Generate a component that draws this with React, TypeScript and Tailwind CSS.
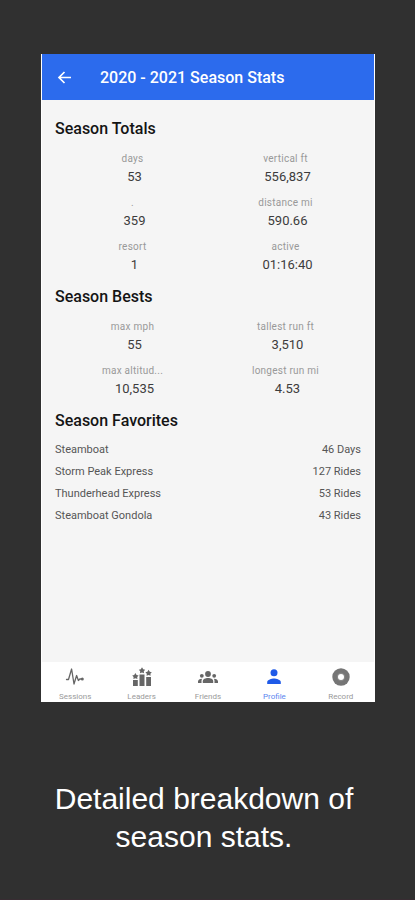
import type { ReactNode } from "react";

type Stat = { label: string; value: string };

const totals: Stat[] = [
    { label: "days", value: "53" },
    { label: "vertical ft", value: "556,837" },
    { label: ".", value: "359" },
    { label: "distance mi", value: "590.66" },
    { label: "resort", value: "1" },
    { label: "active", value: "01:16:40" },
];

const bests: Stat[] = [
    { label: "max mph", value: "55" },
    { label: "tallest run ft", value: "3,510" },
    { label: "max altitud...", value: "10,535" },
    { label: "longest run mi", value: "4.53" },
];

const favorites = [
    { name: "Steamboat", count: "46 Days" },
    { name: "Storm Peak Express", count: "127 Rides" },
    { name: "Thunderhead Express", count: "53 Rides" },
    { name: "Steamboat Gondola", count: "43 Rides" },
];

const SessionsIcon = () => (
    <svg viewBox="0 0 20 20" className="w-5 h-5" fill="none" stroke="currentColor" strokeWidth="1.3" strokeLinejoin="round" strokeLinecap="round">
        <path d="M1.5 12.5H3.5L6.6 2L9 17L11.6 8.5L13.4 13.5L14.8 12H16.5" />
        <circle cx="17.3" cy="12" r="1.5" fill="currentColor" stroke="none" />
    </svg>
);

const LeadersIcon = () => (
    <svg viewBox="0 0 20 20" className="w-5 h-5" fill="currentColor">
        <path d="M1 13h4.8v6H1zM7.5 7.500h5V19h-5zM14.200 10H19v9h-4.800z" />
        <path d="M3.400 6l1.200 1.900 2 .5-1.400 1.600.2 2-2-.8-2 .8.2-2L.2 8.400l2-.5zM10 .3l1.200 1.900 2 .5-1.400 1.600.2 2-2-.8-2 .8.2-2-1.400-1.600 2-.5zM16.600 2.800l1.200 1.900 2 .5-1.400 1.600.2 2-2-.8-2 .8.2-2-1.400-1.600 2-.5z" />
    </svg>
);

const FriendsIcon = () => (
    <svg viewBox="0 0 20 20" className="w-5 h-5" fill="currentColor">
        <circle cx="10" cy="7" r="2.9" />
        <circle cx="3.8" cy="8.8" r="1.9" />
        <circle cx="16.2" cy="8.8" r="1.9" />
        <path d="M4.800 16v-1.700c0-2.200 2.600-3.300 5.200-3.300s5.200 1.100 5.200 3.300V16z" />
        <path d="M0 16v-1.500c0-1.700 1.500-2.700 4.200-2.800-.5.700-.7 1.500-.7 2.400V16zM20 16v-1.500c0-1.700-1.500-2.700-4.200-2.800.5.700.7 1.500.7 2.400V16z" />
    </svg>
);

const ProfileIcon = () => (
    <svg viewBox="0 0 20 20" className="w-5 h-5" fill="currentColor">
        <circle cx="10" cy="5.800" r="3.500" />
        <path d="M3.200 17v-1.900c0-2.400 4.500-3.600 6.800-3.600s6.800 1.200 6.800 3.600V17z" />
    </svg>
);

const RecordIcon = () => (
    <svg viewBox="0 0 20 20" className="w-5 h-5">
        <circle cx="10" cy="10" r="8.7" fill="#757575" />
        <circle cx="10" cy="10" r="4.2" fill="#888888" />
        <circle cx="10" cy="10" r="3" fill="#ffffff" />
    </svg>
);

const tabs: { label: string; icon: ReactNode; active?: boolean }[] = [
    { label: "Sessions", icon: <SessionsIcon /> },
    { label: "Leaders", icon: <LeadersIcon /> },
    { label: "Friends", icon: <FriendsIcon /> },
    { label: "Profile", icon: <ProfileIcon />, active: true },
    { label: "Record", icon: <RecordIcon /> },
];

const SectionTitle = ({ children }: { children: ReactNode }) => (
    <h2 className="text-base leading-5 font-medium text-[#141414]">{children}</h2>
);

const StatGrid = ({ stats }: { stats: Stat[] }) => (
    <dl className="grid grid-cols-2 gap-y-2 py-3">
        {stats.map((stat) => (
            <div key={stat.label} className="flex flex-col items-center pl-1.5">
                <dt className="pr-1 text-[10px] leading-4 tracking-wide text-[#999999]">{stat.label}</dt>
                <dd className="text-[13px] leading-5 text-[#3c3c3c]">{stat.value}</dd>
            </div>
        ))}
    </dl>
);

const App = () => {
    return (
        <div className="flex flex-col min-h-screen border-b border-[#382c32] bg-[#303030] pl-[41px] pr-10 pt-[54px] font-['Roboto',sans-serif]">
            <div className="flex flex-col min-h-[648px] border border-t-0 border-white bg-[#f5f5f5]">
                <header className="flex items-center h-[46px] gap-6 px-[13px] pt-0.5 bg-[#2c6bed] text-white">
                    <button type="button" aria-label="Back" className="w-5 h-5">
                        <svg viewBox="0 0 20 20" className="w-5 h-5" fill="none" stroke="currentColor" strokeWidth="1.7">
                            <path d="M16 9.500H4M9.500 4L4 9.500L9.500 15" />
                        </svg>
                    </button>
                    <h1 className="pl-px text-base leading-5 font-medium">2020 - 2021 Season Stats</h1>
                </header>

                <main className="flex-1 px-[13px] pt-[19px]">
                    <SectionTitle>Season Totals</SectionTitle>
                    <StatGrid stats={totals} />
                    <SectionTitle>Season Bests</SectionTitle>
                    <StatGrid stats={bests} />
                    <SectionTitle>Season Favorites</SectionTitle>
                    <ul className="pt-2">
                        {favorites.map((fav) => (
                            <li key={fav.name} className="flex justify-between text-[11px] leading-[22px] text-[#555555]">
                                <span>{fav.name}</span>
                                <span>{fav.count}</span>
                            </li>
                        ))}
                    </ul>
                </main>

                <nav className="grid grid-cols-5 bg-white pt-[5px]">
                    {tabs.map((tab) => (
                        <button
                            key={tab.label}
                            type="button"
                            className={`flex flex-col items-center gap-[5px] ${tab.active ? "text-[#1f5ae8]" : "text-[#666666]"}`}
                        >
                            {tab.icon}
                            <span className={`text-[8px] leading-[9px] ${tab.active ? "text-[#5c86ef]" : "text-[#9a9a9a]"}`}>{tab.label}</span>
                        </button>
                    ))}
                </nav>
            </div>

            <p className="pt-[78px] pr-2 text-center text-3xl leading-[38px] text-white font-['Liberation_Sans',sans-serif]">
                Detailed breakdown of season stats.
            </p>
        </div>
    );
};

export default App;
